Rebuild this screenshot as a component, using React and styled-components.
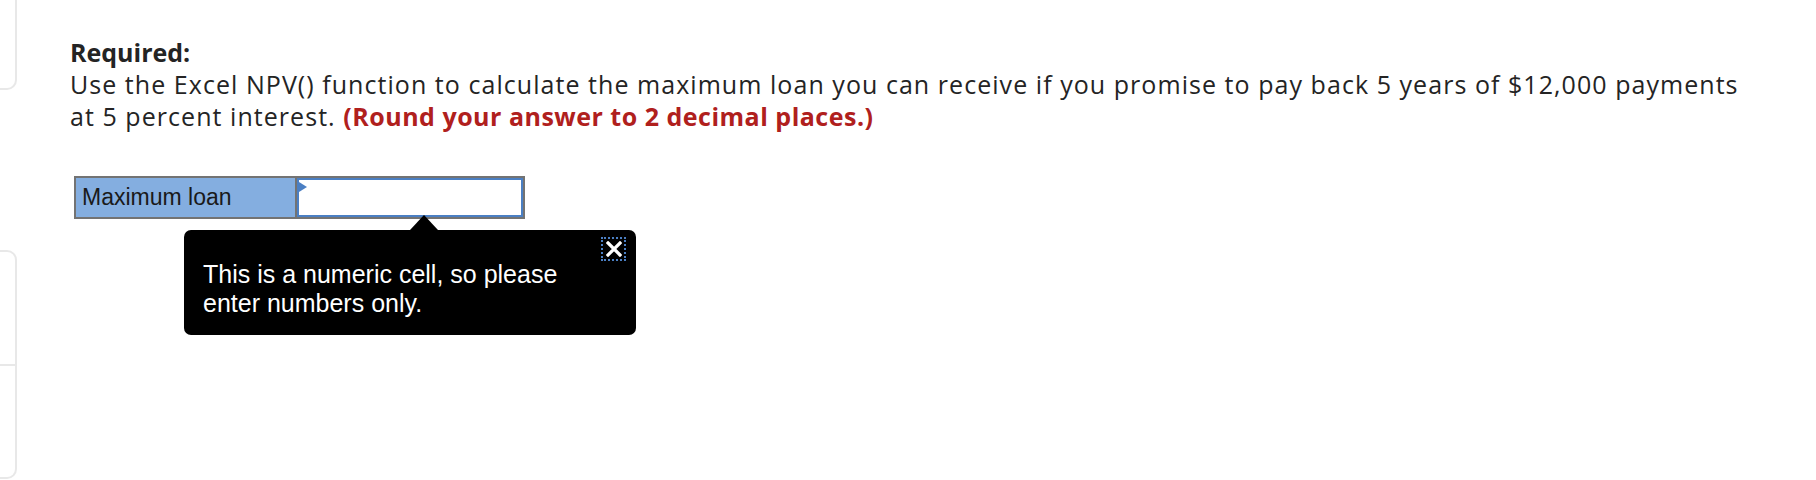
import React from "react";
import styled, { createGlobalStyle } from "styled-components";

const GlobalStyle = createGlobalStyle`
  html, body {
    margin: 0;
    padding: 0;
    background: #ffffff;
  }
  body {
    font-family: "Open Sans", "Lato", sans-serif;
    color: #242424;
  }
`;

const Page = styled.div`
  display: flex;
  width: 1816px;
  height: 480px;
  overflow: hidden;
`;

const Rail = styled.div`
  display: flex;
  flex-direction: column;
  width: 17px;
  flex-shrink: 0;
`;

const RailCard = styled.div`
  margin-top: ${(p) => p.$top}px;
  height: ${(p) => p.$height}px;
  margin-left: -40px;
  border: 2px solid #e8e8e8;
  border-left: none;
  border-top: ${(p) => (p.$noTop ? "none" : "2px solid #e8e8e8")};
  border-radius: ${(p) => p.$radius};
  display: flex;
  flex-direction: column;
`;

const RailDivider = styled.div`
  flex: 1;
  & + & {
    border-top: 2px solid #e8e8e8;
  }
`;

const Content = styled.div`
  padding: 36px 0 0 53px;
`;

const Heading = styled.div`
  font-size: 25px;
  line-height: 32px;
  font-weight: 700;
`;

const Question = styled.p`
  margin: 0;
  width: 1685px;
  font-size: 25px;
  line-height: 32px;
  letter-spacing: 1.05px;
`;

const Hint = styled.strong`
  color: #b0201d;
  font-weight: 700;
  letter-spacing: 0.5px;
`;

const Sheet = styled.div`
  position: relative;
  margin: 44px 0 0 4px;
  width: 451px;
`;

const Grid = styled.div`
  display: flex;
  height: 43px;
  box-sizing: border-box;
  border: 2px solid #737373;
  font-family: "Liberation Sans", Arial, sans-serif;
`;

const LabelCell = styled.div`
  width: 221px;
  flex-shrink: 0;
  background: #84aee0;
  border-right: 2px solid #737373;
  display: flex;
  align-items: center;
  padding-left: 6px;
  box-sizing: border-box;
  font-size: 23px;
  color: #1a1a1a;
`;

const InputCell = styled.div`
  position: relative;
  flex: 1;
  border: 2px solid #4b7fc3;
  background: #ffffff;
`;

const CellMark = styled.span`
  position: absolute;
  top: 2px;
  left: 0;
  width: 0;
  height: 0;
  border-top: 5px solid transparent;
  border-bottom: 5px solid transparent;
  border-left: 8px solid #4b7fc3;
`;

const Tooltip = styled.div`
  position: absolute;
  top: 54px;
  left: 110px;
  width: 452px;
  box-sizing: border-box;
  padding: 7px 10px 17px 19px;
  background: #000000;
  border-radius: 7px;
  color: #ffffff;
  font-family: "Liberation Sans", Arial, sans-serif;

  &::before {
    content: "";
    position: absolute;
    top: -15px;
    left: 226px;
    border-left: 14px solid transparent;
    border-right: 14px solid transparent;
    border-bottom: 15px solid #000000;
  }
`;

const TipHead = styled.div`
  display: flex;
  justify-content: flex-end;
`;

const CloseButton = styled.button`
  width: 25px;
  height: 24px;
  padding: 0;
  margin: 0;
  background: transparent;
  border: 2px dotted #4b7fc3;
  display: flex;
  align-items: center;
  justify-content: center;
  cursor: pointer;
`;

const TipText = styled.div`
  margin-top: -1px;
  font-size: 25px;
  line-height: 29px;
`;

const CloseIcon = () => (
  <svg width="16" height="16" viewBox="0 0 16 16">
    <path d="M2 2 L14 14 M14 2 L2 14" stroke="#ffffff" strokeWidth="3.2" strokeLinecap="square" />
  </svg>
);

export default function App() {
  return (
    <>
      <GlobalStyle />
      <Page>
        <Rail>
          <RailCard $top={-20} $height={108} $radius="0 0 10px 0" $noTop />
          <RailCard $top={160} $height={225} $radius="0 10px 10px 0">
            <RailDivider />
            <RailDivider />
          </RailCard>
        </Rail>
        <Content>
          <Heading>Required:</Heading>
          <Question>
            Use the Excel NPV() function to calculate the maximum loan you can receive if you
            promise to pay back 5 years of $12,000 payments at 5 percent interest.{" "}
            <Hint>(Round your answer to 2 decimal places.)</Hint>
          </Question>
          <Sheet>
            <Grid>
              <LabelCell>Maximum loan</LabelCell>
              <InputCell>
                <CellMark />
              </InputCell>
            </Grid>
            <Tooltip role="tooltip">
              <TipHead>
                <CloseButton aria-label="Close">
                  <CloseIcon />
                </CloseButton>
              </TipHead>
              <TipText>
                This is a numeric cell, so please
                <br />
                enter numbers only.
              </TipText>
            </Tooltip>
          </Sheet>
        </Content>
      </Page>
    </>
  );
}
